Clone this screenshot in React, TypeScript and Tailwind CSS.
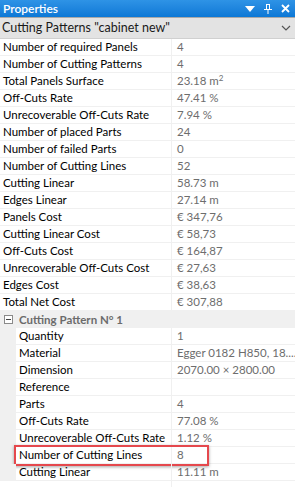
import React from 'react';

const FONT = { fontFamily: 'Lato, "Noto Sans", sans-serif' };

type Row = { label: string; value: React.ReactNode };

const summary: Row[] = [
  { label: 'Number of required Panels', value: '4' },
  { label: 'Number of Cutting Patterns', value: '4' },
  { label: 'Total Panels Surface', value: <>23.18 m<sup className="text-[8px]">2</sup></> },
  { label: 'Off-Cuts Rate', value: '47.41 %' },
  { label: 'Unrecoverable Off-Cuts Rate', value: '7.94 %' },
  { label: 'Number of placed Parts', value: '24' },
  { label: 'Number of failed Parts', value: '0' },
  { label: 'Number of Cutting Lines', value: '52' },
  { label: 'Cutting Linear', value: '58.73 m' },
  { label: 'Edges Linear', value: '27.14 m' },
  { label: 'Panels Cost', value: '€ 347,76' },
  { label: 'Cutting Linear Cost', value: '€ 58,73' },
  { label: 'Off-Cuts Cost', value: '€ 164,87' },
  { label: 'Unrecoverable Off-Cuts Cost', value: '€ 27,63' },
  { label: 'Edges Cost', value: '€ 38,63' },
  { label: 'Total Net Cost', value: '€ 307,88' },
];

const pattern: Row[] = [
  { label: 'Quantity', value: '1' },
  { label: 'Material', value: 'Egger 0182 H850, 18....' },
  { label: 'Dimension', value: '2070.00 × 2800.00' },
  { label: 'Reference', value: '' },
  { label: 'Parts', value: '4' },
  { label: 'Off-Cuts Rate', value: '77.08 %' },
  { label: 'Unrecoverable Off-Cuts Rate', value: '1.12 %' },
  { label: 'Number of Cutting Lines', value: '8' },
  { label: 'Cutting Linear', value: '11.11 m' },
];

function PropRow({ row, indent, highlight }: { row: Row; indent?: boolean; highlight?: boolean }) {
  return (
    <div className="relative flex h-[17px]">
      {indent && <div className="w-[16px] shrink-0 bg-[#f0f0f0]" />}
      <div className="flex flex-1 border-b border-[#f0f0f0]">
        <div className={`${indent ? 'w-[156px]' : 'w-[172px]'} shrink-0 border-r border-[#f0f0f0] pl-[3px] text-[11.5px] leading-[16px] text-black whitespace-nowrap overflow-hidden`}>
          {row.label}
        </div>
        <div className="flex-1 pl-[5px] text-[11.5px] leading-[16px] text-[#6d6d6d] whitespace-nowrap overflow-hidden">
          {row.value}
        </div>
      </div>
      {highlight && (
        <div className="absolute left-[14px] top-[-2px] h-[21px] w-[195px] border-2 border-[#e5484d] shadow-[0_1px_3px_rgba(0,0,0,0.35)]" />
      )}
    </div>
  );
}

export default function App() {
  return (
    <div className="w-[295px] h-[487px] bg-white overflow-hidden flex flex-col" style={FONT}>
      <div className="h-[17px] flex items-center justify-between bg-gradient-to-b from-[#2e93e6] to-[#0b78d6] px-[3px]">
        <span className="text-[12px] font-semibold text-white leading-none">Properties</span>
        <div className="flex items-center gap-[9px] pr-[2px]">
          <svg width="10" height="6" viewBox="0 0 10 6"><path d="M0 0h10L5 6z" fill="white" /></svg>
          <svg width="8" height="10" viewBox="0 0 8 10"><path d="M2 0h4v5h2v1H4.5v4h-1V6H0V5h2z M3 1v4h2V1z" fill="white" fillRule="evenodd" /></svg>
          <svg width="9" height="9" viewBox="0 0 9 9"><path d="M1 1l7 7M8 1L1 8" stroke="white" strokeWidth="1.8" /></svg>
        </div>
      </div>
      <div className="h-[22px] flex items-center justify-between bg-[#e3e3e3] border-t border-[#a9a9a9] border-b border-b-[#d0d0d0] pl-[2px] pr-[4px]">
        <span className="text-[12.5px] text-[#1a1a1a]">Cutting Patterns "cabinet new"</span>
        <svg width="10" height="6" viewBox="0 0 10 6"><path d="M1 1l4 4 4-4" stroke="#555" strokeWidth="1.2" fill="none" /></svg>
      </div>
      <div className="flex-1 flex flex-col">
        {summary.map((r) => (
          <PropRow key={r.label} row={r} />
        ))}
        <div className="h-[17px] flex items-center bg-[#f0f0f0]">
          <div className="w-[16px] flex justify-center">
            <svg width="9" height="9" viewBox="0 0 9 9">
              <rect x="0.5" y="0.5" width="8" height="8" fill="white" stroke="#8a8a8a" />
              <path d="M2 4.5h5" stroke="#444" />
            </svg>
          </div>
          <span className="pl-[3px] text-[11.5px] font-bold text-[#6b6b6b]">Cutting Pattern N° 1</span>
        </div>
        {pattern.map((r) => (
          <PropRow key={r.label + 'p'} row={r} indent highlight={r.label === 'Number of Cutting Lines'} />
        ))}
        <div className="flex flex-1">
          <div className="w-[172px] border-r border-[#f0f0f0]" />
        </div>
      </div>
    </div>
  );
}
